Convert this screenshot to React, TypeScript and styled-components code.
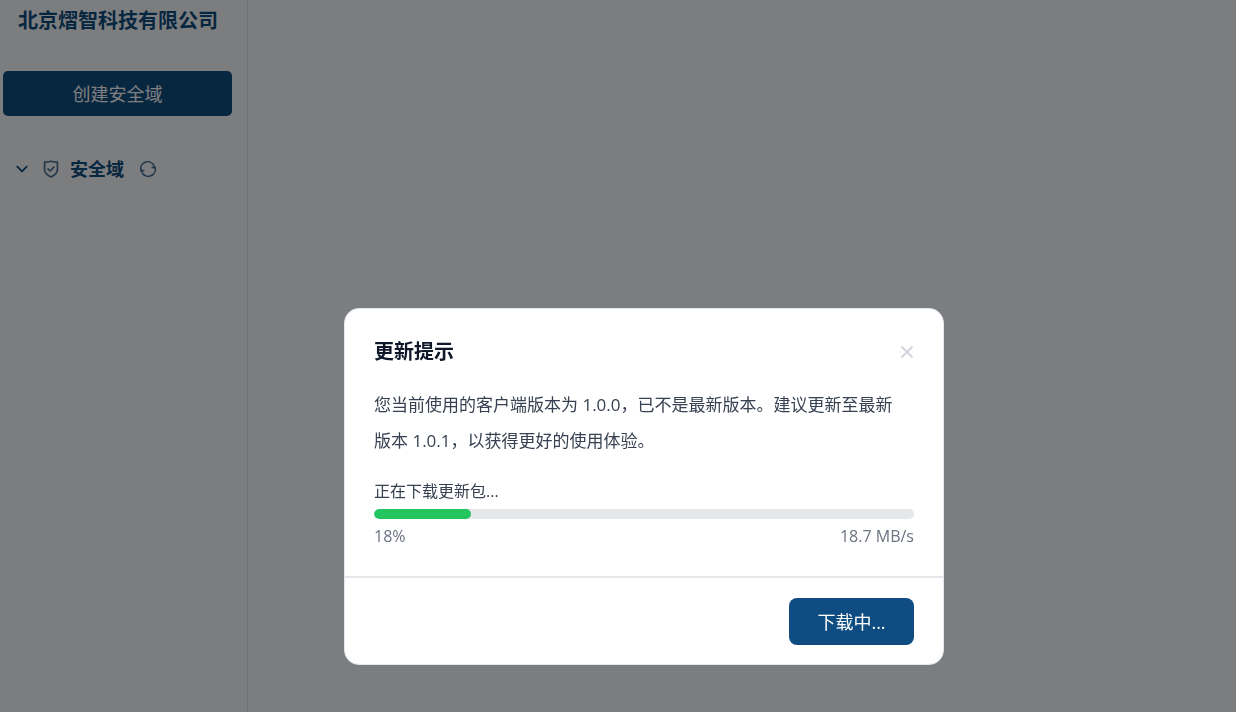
import React from "react";
import styled, { createGlobalStyle } from "styled-components";

const GlobalStyle = createGlobalStyle`
  *, *::before, *::after { box-sizing: border-box; }
  body {
    margin: 0;
    background: #f8fafc;
    font-family: "Open Sans", "Noto Sans CJK SC", sans-serif;
  }
  button { font-family: inherit; cursor: pointer; }
  h1, h2, p { margin: 0; }
`;

const Page = styled.div`
  display: flex;
  min-height: 100vh;
`;

const Sidebar = styled.aside`
  width: 248px;
  flex: none;
  padding: 5px 15px 0 3px;
  border-right: 1px solid #e5e7eb;
`;

const Company = styled.h1`
  padding-left: 15px;
  font-size: 20px;
  line-height: 32px;
  font-weight: 700;
  color: #0f4c81;
`;

const CreateButton = styled.button`
  display: block;
  width: 100%;
  height: 45px;
  margin-top: 34px;
  padding: 0;
  border: 0;
  border-radius: 5px;
  background: #0f4c81;
  color: #ffffff;
  font-size: 18px;
  line-height: 28px;
`;

const DomainRow = styled.div`
  display: flex;
  align-items: center;
  height: 32px;
  margin-top: 37px;
  padding-left: 10px;
  color: #0f4c81;
`;

const IconButton = styled.button<{ $tone: string }>`
  display: flex;
  padding: 0;
  border: 0;
  background: none;
  color: ${(p) => p.$tone};
`;

const DomainLabel = styled.span`
  display: flex;
  align-items: center;
  gap: 10px;
  margin: 0 14px 0 11px;
  font-size: 18px;
  line-height: 28px;
  font-weight: 700;
`;

const Main = styled.main`
  flex: 1;
`;

const Overlay = styled.div`
  position: fixed;
  inset: 0;
  display: flex;
  justify-content: center;
  align-items: flex-start;
  padding: 308px 0 0 52px;
  background: rgba(0, 0, 0, 0.5);
`;

const Dialog = styled.section`
  width: 600px;
  max-width: 100%;
  border: 1px solid #e2e8f0;
  border-radius: 15px;
  background: #ffffff;
`;

const DialogHeader = styled.header`
  display: flex;
  justify-content: space-between;
  align-items: center;
  padding: 27px 29px 0;
`;

const DialogTitle = styled.h2`
  font-size: 20px;
  line-height: 32px;
  font-weight: 700;
  color: #0f172a;
`;

const DialogBody = styled.div`
  padding: 19px 29px 28px;
`;

const Message = styled.p`
  padding-right: 10px;
  font-size: 17px;
  line-height: 36px;
  color: #374151;
`;

const Status = styled.label`
  display: block;
  margin-top: 20px;
  font-size: 16px;
  line-height: 24px;
  color: #374151;
`;

const Progress = styled.progress`
  display: block;
  width: 100%;
  height: 10px;
  margin: 6px 0;
  appearance: none;
  border: 0;
  border-radius: 5px;
  overflow: hidden;
  background: #e5e7eb;

  &::-webkit-progress-bar {
    background: #e5e7eb;
  }
  &::-webkit-progress-value {
    border-radius: 5px;
    background: #22c55e;
  }
`;

const Stats = styled.div`
  display: flex;
  justify-content: space-between;
  font-size: 16px;
  line-height: 23px;
  color: #6b7280;
`;

const DialogFooter = styled.footer`
  display: flex;
  justify-content: flex-end;
  padding: 20px 29px 19px;
  border-top: 2px solid #e5e7eb;
`;

const DownloadButton = styled.button`
  min-width: 125px;
  height: 47px;
  padding: 0 28px;
  border: 0;
  border-radius: 8px;
  background: #0f4c81;
  color: #ffffff;
  font-size: 18px;
  line-height: 28px;
`;

const ChevronIcon = () => (
  <svg width="18" height="18" viewBox="0 0 18 18" fill="none" stroke="currentColor" strokeWidth="1.8" strokeLinecap="round" strokeLinejoin="round" aria-hidden="true">
    <path d="M4.300 6.600 9 11.300l4.700-4.700" />
  </svg>
);

const ShieldIcon = () => (
  <svg width="18" height="20" viewBox="0 0 18 20" fill="none" stroke="#4a7095" strokeWidth="1.700" strokeLinejoin="round" aria-hidden="true">
    <path d="M9 2.200c2.200.7 4.400.9 6.400.9v7.800c0 3.100-3 5.300-6.400 7-3.400-1.700-6.400-3.900-6.400-7V3.100c2 0 4.200-.2 6.400-.9Z" />
    <path d="m5.500 9.500 2.600 2.500 4.300-4.500" />
  </svg>
);

const RefreshIcon = () => (
  <svg width="20" height="20" viewBox="0 0 20 20" fill="none" stroke="currentColor" strokeWidth="1.600" strokeLinecap="round" strokeLinejoin="round" aria-hidden="true">
    <path d="M3 12a7.100 7.100 0 0 1 12.600-6.200M17 8a7.100 7.100 0 0 1-12.600 6.200" />
    <path d="M6.500 11.500 3.500 13.500 2.700 10.500ZM13.500 8.500 16.500 6.500 17.300 9.500Z" fill="currentColor" strokeWidth="0.400" />
  </svg>
);

const CloseIcon = () => (
  <svg width="14" height="14" viewBox="0 0 14 14" fill="none" stroke="currentColor" strokeWidth="1.800" aria-hidden="true">
    <path d="m1.500 1.500 11 11m0-11-11 11" />
  </svg>
);

export default function App() {
  return (
    <>
      <GlobalStyle />
      <Page>
        <Sidebar>
          <Company>北京熠智科技有限公司</Company>
          <CreateButton type="button">创建安全域</CreateButton>
          <DomainRow>
            <IconButton type="button" aria-label="折叠" $tone="#0f4c81">
              <ChevronIcon />
            </IconButton>
            <DomainLabel>
              <ShieldIcon />
              安全域
            </DomainLabel>
            <IconButton type="button" aria-label="刷新" $tone="#3f6b94">
              <RefreshIcon />
            </IconButton>
          </DomainRow>
        </Sidebar>
        <Main />
      </Page>
      <Overlay>
        <Dialog role="dialog" aria-modal="true" aria-labelledby="update-title">
          <DialogHeader>
            <DialogTitle id="update-title">更新提示</DialogTitle>
            <IconButton type="button" aria-label="关闭" $tone="#d1d5db">
              <CloseIcon />
            </IconButton>
          </DialogHeader>
          <DialogBody>
            <Message>
              您当前使用的客户端版本为 1.0.0，已不是最新版本。建议更新至最新版本 1.0.1，以获得更好的使用体验。
            </Message>
            <Status htmlFor="download">正在下载更新包...</Status>
            <Progress id="download" max={100} value={18} />
            <Stats>
              <span>18%</span>
              <span>18.7 MB/s</span>
            </Stats>
          </DialogBody>
          <DialogFooter>
            <DownloadButton type="button">下载中...</DownloadButton>
          </DialogFooter>
        </Dialog>
      </Overlay>
    </>
  );
}
